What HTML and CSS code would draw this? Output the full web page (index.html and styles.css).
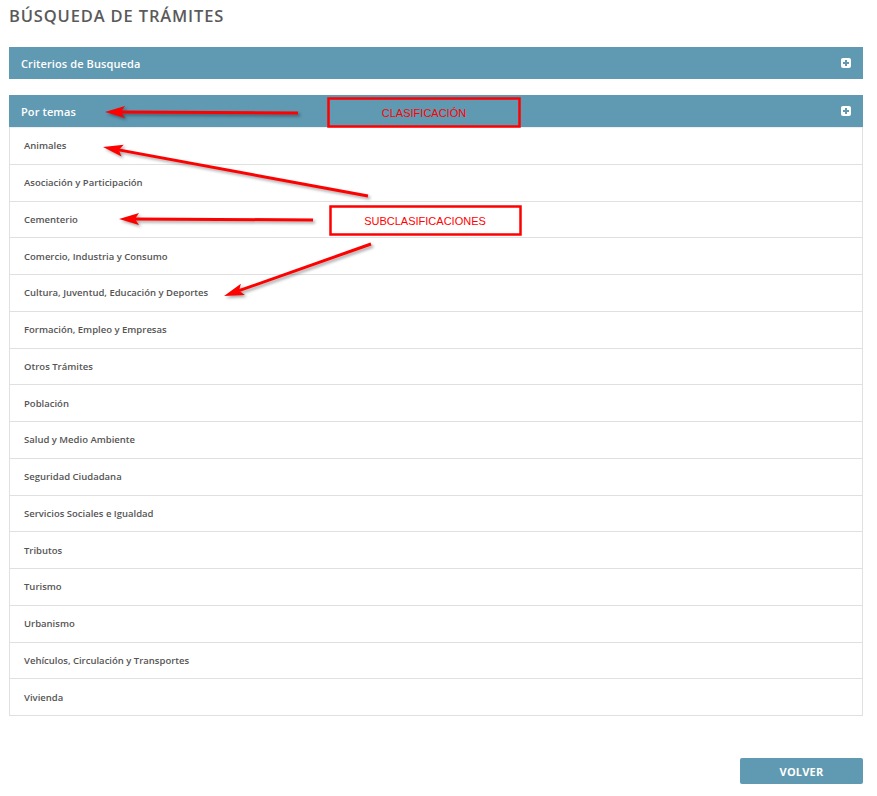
FILE: index.html
```html
<!DOCTYPE html>
<html lang="es">
<head>
<meta charset="utf-8">
<title>Búsqueda de Trámites</title>
<link rel="stylesheet" href="styles.css">
</head>
<body>
<div class="page">
  <h1 class="title">BÚSQUEDA DE TRÁMITES</h1>

  <section class="panel">
    <div class="panel-head">
      <span class="panel-title">Criterios de Busqueda</span>
      <span class="plus"></span>
    </div>
  </section>

  <section class="panel panel-open">
    <div class="panel-head">
      <span class="panel-title">Por temas</span>
      <span class="plus"></span>
    </div>
    <ul class="list">
      <li>Animales</li>
      <li>Asociación y Participación</li>
      <li>Cementerio</li>
      <li>Comercio, Industria y Consumo</li>
      <li>Cultura, Juventud, Educación y Deportes</li>
      <li>Formación, Empleo y Empresas</li>
      <li>Otros Trámites</li>
      <li>Población</li>
      <li>Salud y Medio Ambiente</li>
      <li>Seguridad Ciudadana</li>
      <li>Servicios Sociales e Igualdad</li>
      <li>Tributos</li>
      <li>Turismo</li>
      <li>Urbanismo</li>
      <li>Vehículos, Circulación y Transportes</li>
      <li>Vivienda</li>
    </ul>
  </section>

  <div class="actions">
    <button class="btn">VOLVER</button>
  </div>

  <svg class="annot" width="877" height="796" viewBox="0 0 877 796">
    <g class="arrows">
      <line x1="121" y1="112" x2="298" y2="113" />
      <polygon points="105,112 125,106 121,112 125,118" />
      <line x1="118.7" y1="149.9" x2="368" y2="196" />
      <polygon points="103,147 123.76,144.74 118.73,149.91 121.58,156.54" />
      <line x1="135" y1="219" x2="313" y2="220" />
      <polygon points="119,219 139,213 135,219 139,225" />
      <line x1="239" y1="290.7" x2="371" y2="244" />
      <polygon points="224,296 240.86,283.67 239.09,290.66 244.86,294.99" />
    </g>
    <rect class="box" x="328.5" y="98.5" width="191" height="28" fill="none" />
    <text class="box-text" x="424" y="117">CLASIFICACIÓN</text>
    <rect class="box" x="330.5" y="206.5" width="190" height="28" fill="#fff" />
    <text class="box-text" x="425" y="225">SUBCLASIFICACIONES</text>
  </svg>
</div>
</body>
</html>
```

FILE: styles.css
```css
* { box-sizing: border-box; }

html, body {
  margin: 0;
  padding: 0;
  background: #fff;
}

body {
  font-family: "Open Sans", "Noto Sans", "Liberation Sans", sans-serif;
  color: #555;
}

.page {
  position: relative;
  width: 877px;
  height: 796px;
  padding: 0 14px 0 9px;
}

.title {
  margin: 0;
  padding-top: 5px;
  height: 47px;
  font-size: 16.5px;
  line-height: 22px;
  font-weight: 600;
  color: #5a5a5a;
  letter-spacing: 0.85px;
}

.panel {
  margin-bottom: 16px;
}

.panel-head {
  height: 32px;
  background: #5f99b2;
  display: flex;
  align-items: center;
  justify-content: space-between;
  padding: 0 12px 0 12px;
  color: #fff;
}

.panel-title {
  font-size: 11px;
  font-weight: 600;
  letter-spacing: 0.1px;
}

.plus {
  position: relative;
  width: 10px;
  height: 10px;
  background: #fff;
  border-radius: 2px;
}

.plus::before,
.plus::after {
  content: "";
  position: absolute;
  background: #5f99b2;
}

.plus::before {
  left: 2px;
  top: 4px;
  width: 6px;
  height: 2px;
}

.plus::after {
  left: 4px;
  top: 2px;
  width: 2px;
  height: 6px;
}

.list {
  list-style: none;
  margin: 0;
  padding: 0;
  border: 1px solid #e0e0e0;
  border-top: none;
}

.list li {
  height: 36.75px;
  display: flex;
  align-items: center;
  padding-left: 14px;
  font-size: 9.5px;
  font-weight: 600;
  color: #555;
  border-top: 1px solid #e0e0e0;
}

.list li:first-child {
  border-top: 1px solid #eee;
}

.actions {
  display: flex;
  justify-content: flex-end;
  margin-top: 42px;
}

.btn {
  width: 123px;
  height: 26px;
  border: none;
  border-radius: 2px;
  background: #5f99b2;
  color: #fff;
  font-family: "Open Sans", "Noto Sans", sans-serif;
  font-size: 11px;
  font-weight: 700;
  letter-spacing: 0.2px;
}

.annot {
  position: absolute;
  left: 0;
  top: 0;
  pointer-events: none;
}

.arrows {
  filter: drop-shadow(2px 2px 1.5px rgba(0, 0, 0, 0.35));
}

.arrows line {
  stroke: #f00;
  stroke-width: 3;
}

.arrows polygon {
  fill: #f00;
}

.box {
  stroke: #f00;
  stroke-width: 2.5;
}

.box-text {
  fill: #f00;
  font-family: "Liberation Sans", "DejaVu Sans", sans-serif;
  font-size: 11px;
  text-anchor: middle;
}
```
